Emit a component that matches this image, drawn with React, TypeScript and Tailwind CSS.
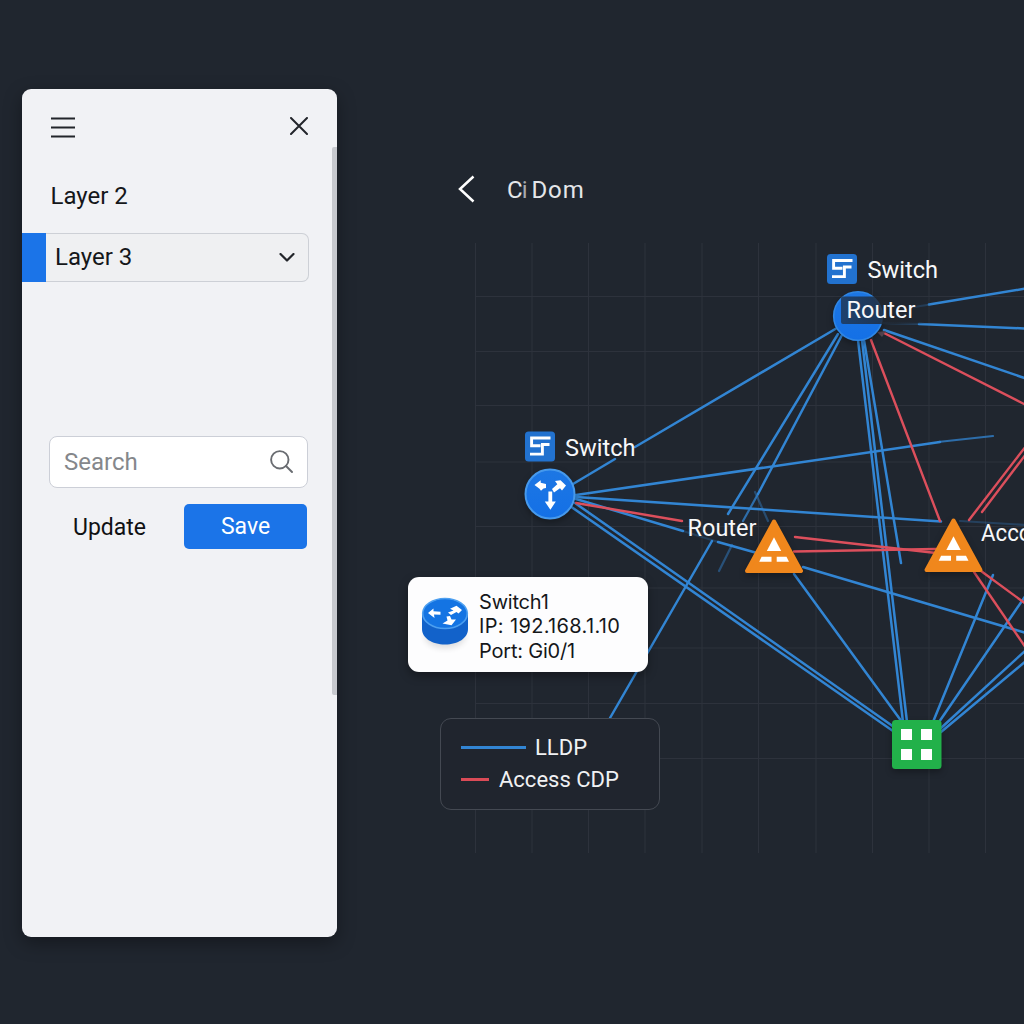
import React from "react";

const columns = [475.5, 532, 588.5, 645, 702, 758.5, 816, 872.5, 929, 985.5];
const rows = [296.5, 351.5, 405.5, 462, 526.5, 588, 648, 703.5, 758.5];

type Link = [number, number, number, number, number?];

const lldpLinks: Link[] = [
  [573, 484, 615, 459],
  [635, 447, 837, 328],
  [576, 495, 940, 442],
  [576, 497, 941, 521.5],
  [576, 499, 683, 531],
  [718, 542, 757, 553],
  [803, 567, 1026, 633],
  [575, 503, 894, 727],
  [570, 506, 893, 731],
  [838, 334, 728, 514],
  [712, 541, 610, 718],
  [842, 335, 758, 494],
  [858, 340, 903, 722],
  [862, 340, 907, 722],
  [864, 340, 901, 563],
  [929, 304.5, 1026, 288.5],
  [919, 324, 1026, 328.5],
  [884, 330, 1026, 378.5],
  [794, 574, 902, 722],
  [993, 575, 933, 722],
  [1026, 595, 939, 722],
  [1026, 650, 941, 728],
  [1026, 661, 941, 732],
];

const fadedLinks: Link[] = [
  [938, 442, 993, 436, 0.75],
  [880, 323, 920, 324, 0.3],
  [914, 307, 930, 304.5, 0.3],
  [758, 494, 743, 521, 0.75],
  [732, 545, 719, 571, 0.45],
  [755, 492, 768, 521, 0.4],
  [960, 521, 1026, 525, 0.28],
  [683, 531, 718, 542, 0.25],
];

const cdpLinks: Link[] = [
  [884, 333, 1026, 405],
  [871, 340, 940, 521],
  [576, 503, 682, 521],
  [795, 537, 936, 553],
  [794, 551.5, 936, 549],
  [969, 520, 1026, 446],
  [982, 512, 1026, 454],
  [974, 572, 1026, 648],
  [981, 571, 1026, 604],
];

function Lines({ links, stroke, width }: { links: Link[]; stroke: string; width: number }) {
  return (
    <g stroke={stroke} strokeWidth={width} strokeLinecap="round">
      {links.map(([x1, y1, x2, y2, o], i) => (
        <line key={i} x1={x1} y1={y1} x2={x2} y2={y2} opacity={o ?? 1} />
      ))}
    </g>
  );
}

function SwitchBadge({ x, y }: { x: number; y: number }) {
  return (
    <g transform={`translate(${x} ${y})`}>
      <rect width="30" height="30" rx="3.5" fill="#2272cf" />
      <path d="M25.5 6.5H6.6V14.2H15.5M5 22.6H17.4V13H24.5" fill="none" stroke="#fff" strokeWidth="2.9" />
    </g>
  );
}

function AccessNode({ x, y }: { x: number; y: number }) {
  return (
    <g transform={`translate(${x} ${y})`} filter="url(#nodeShadow)">
      <path d="M0 -24.5L27 25H-27Z" fill="#f0871c" stroke="#f0871c" strokeWidth="4" strokeLinejoin="round" />
      <path d="M0 -8.8L7.2 5H-7.2Z" fill="#fff" />
      <path d="M-12.4 10.8H-2.5V15.8H-14.8ZM2.7 10.8H12.5L15 15.8H2.7Z" fill="#fff" />
    </g>
  );
}

function Label({ x, y, length, children }: { x: number; y: number; length?: number; children: string }) {
  return (
    <text x={x} y={y} fontSize={23} fill="#f7f8fa" textLength={length} lengthAdjust="spacingAndGlyphs">
      {children}
    </text>
  );
}

function Topology() {
  return (
    <svg className="absolute inset-0 h-full w-full font-[Roboto,sans-serif]" viewBox="337 0 687 1024">
      <defs>
        <filter id="nodeShadow" x="-30%" y="-30%" width="160%" height="160%" colorInterpolationFilters="sRGB">
          <feDropShadow dx="0" dy="3" stdDeviation="3" floodColor="#000" floodOpacity="0.3" />
        </filter>
        <linearGradient id="plate">
          <stop offset="0" stopColor="#20262f" stopOpacity="0.65" />
          <stop offset="0.6" stopColor="#20262f" stopOpacity="0.85" />
          <stop offset="1" stopColor="#20262f" stopOpacity="0" />
        </linearGradient>
        <linearGradient id="node" x2="0" y2="1">
          <stop offset="0" stopColor="#1d77e4" />
          <stop offset="1" stopColor="#1470e6" />
        </linearGradient>
      </defs>

      <g stroke="#2d323c" strokeWidth="1">
        {columns.map((x) => <line key={x} x1={x} y1="243" x2={x} y2="853" />)}
        {rows.map((y) => <line key={y} x1="475" y1={y} x2="1024" y2={y} />)}
      </g>

      <Lines links={lldpLinks} stroke="#3285d3" width={2.5} />
      <Lines links={fadedLinks} stroke="#3285d3" width={2.2} />
      <Lines links={cdpLinks} stroke="#dc4f5c" width={2.4} />

      <path d="M877 332L886 331L882 337Z" fill="#56454f" />
      <g filter="url(#nodeShadow)">
        <circle cx="858" cy="316" r="24.3" fill="url(#node)" stroke="#2f86e4" strokeWidth="1.6" />
      </g>
      <rect x="841" y="296.5" width="92" height="27.5" rx="2" fill="url(#plate)" />
      <SwitchBadge x={827} y={254} />
      <Label x={867.5} y={278} length={70.5}>Switch</Label>
      <Label x={846.5} y={318} length={69}>Router</Label>

      <g filter="url(#nodeShadow)">
        <circle cx="550" cy="494" r="24.5" fill="url(#node)" stroke="#4699ec" strokeWidth="2" />
      </g>
      <g transform="translate(550 494)" fill="#fff">
        <path d="M-1.6 -2.5H2.2V7.5H5.8L0.4 15.8L-5.2 7.5H-1.6Z" />
        <path d="M-15.5 -9L-9.3 -13.8V-11.3L-4 -10V-6L-6.5 -5.5L-9 -3.2L-10.5 -5.2Z" />
        <path d="M16 -8.5L10.5 -13.8L5 -13L7.3 -9.8L2 -5L4 -1.5L10 -5.7L12 -3.5Z" />
      </g>
      <SwitchBadge x={525} y={431.5} />
      <Label x={565} y={456} length={70.5}>Switch</Label>
      <Label x={687.5} y={535.5} length={69}>Router</Label>

      <AccessNode x={774} y={546} />
      <AccessNode x={953.5} y={545} />
      <Label x={981} y={541} length={50.5}>Acco</Label>

      <g filter="url(#nodeShadow)">
        <rect x="892" y="720" width="49.5" height="49" rx="3.5" fill="#22b14a" />
        <path d="M901 729h11v11h-11zM921 729h11v11h-11zM901 749h11v11h-11zM921 749h11v11h-11z" fill="#fff" />
      </g>
    </svg>
  );
}

function RouterIcon() {
  return (
    <svg className="mt-4 h-[60px] w-[50px] shrink-0" viewBox="0 0 50 60" fill="none">
      <ellipse cx="25" cy="44" rx="20" ry="11" fill="#000" opacity=".13" filter="blur(3px)" />
      <path d="M2 20V36C2 45 12 51.5 25 51.5S48 45 48 36V20Z" fill="#1262ca" />
      <ellipse cx="25" cy="20.500" rx="22.300" ry="15" fill="#1474e3" stroke="#4c9ff0" strokeWidth="1.600" />
      <g fill="#fff">
        <path d="M8 20L13.500 15.500V18.200L20.500 18.700V21.800L14 21.500L14.500 25Z" />
        <path d="M28 19.500L33.500 17.500L30 15.800L36.500 12.800L42 17L38.500 20.500L36.500 19L31 22Z" />
        <path d="M26.500 23.500L30 23L31.500 26.500H36L31.500 32.200L22.500 30.500L27.500 27.500Z" />
      </g>
    </svg>
  );
}

export default function App() {
  return (
    <div className="flex h-[1024px] w-[1024px] overflow-hidden bg-[#20262f] font-[Roboto,sans-serif] text-[#15171a]">
      <aside className="relative z-10 mt-[89px] ml-[22px] h-[848px] w-[315px] shrink-0 overflow-hidden rounded-[9px] bg-[#f1f2f5] shadow-[0_6px_18px_rgba(0,0,0,0.35)]">
        <header className="flex h-[76px] items-center justify-between px-[29px]">
          <svg className="mt-0.5 h-6 w-6" viewBox="0 0 24 24" stroke="#22252a" strokeWidth="2.100" strokeLinecap="butt">
            <path d="M0 2.500H24M0 11.500H24M0 20.500H24" />
          </svg>
          <svg className="mb-[2px] h-[18px] w-[18px]" viewBox="0 0 18 18" stroke="#22252a" strokeWidth="2" strokeLinecap="round">
            <path d="M1 1L17 17M17 1L1 17" />
          </svg>
        </header>
        <div className="mt-4 pl-[28.500px] text-[24px] leading-[30px]">Layer 2</div>
        <div className="mt-[22px] flex h-[49px] pr-[28px]">
          <div className="w-6 bg-[#1b74e8]" />
          <button className="flex flex-1 items-center justify-between rounded-r-[7px] border border-l-0 border-[#cdd0d6] bg-[#eff0f2] pr-[13px] pb-[2px] pl-[9px] text-[24px]">
            <span>Layer 3</span>
            <svg className="mt-[2px] h-[9px] w-4" viewBox="0 0 16 9" fill="none" stroke="#22252a" strokeWidth="2.200" strokeLinecap="round" strokeLinejoin="round">
              <path d="M1.500 1L8 7.500L14.500 1" />
            </svg>
          </button>
        </div>
        <div className="mt-[154px] mr-[29px] ml-[27px] flex h-[52px] items-center justify-between rounded-[8px] border-[1.500px] border-[#cccfd7] bg-white px-[14px]">
          <span className="text-[24px] text-[#85878b]">Search</span>
          <svg className="mb-0.5 h-[23px] w-[23px]" viewBox="0 0 23 23" fill="none" stroke="#696c71" strokeWidth="1.900" strokeLinecap="round">
            <circle cx="9.800" cy="9.800" r="8.700" />
            <path d="M16 16L22 22" />
          </svg>
        </div>
        <div className="mt-4 flex h-[45px] items-center pr-[30px] pl-[51px] text-[23px]">
          <button className="w-[73px] pt-[3px] whitespace-nowrap text-[#101113]">Update</button>
          <button className="ml-auto h-full w-[123px] rounded-[5px] bg-[#1b74e8] pt-[2px] text-white">Save</button>
        </div>
        <div className="absolute top-[58px] right-0 h-[548px] w-[5px] rounded-l-[2px] bg-[#c7c9ce]" />
      </aside>

      <main className="relative min-w-0 flex-1">
        <Topology />
        <header className="relative flex h-[220px] items-end pb-[14px] pl-[121px] text-[#e4e6e9]">
          <svg className="mb-[3px] h-7 w-[17px]" viewBox="0 0 17 28" fill="none" stroke="#fff" strokeWidth="2.500">
            <path d="M15.500 1.500L2 14L15.500 26.500" />
          </svg>
          <h1 className="ml-[32px] flex text-[24px] leading-8">
            <span>C</span>
            <span className="ml-[-1px] text-[#a5a9af]">i</span>
            <span className="ml-[4px] tracking-[0.900px]">Dom</span>
          </h1>
        </header>
        <section className="absolute top-[577px] left-[71px] flex h-[95px] w-[240px] rounded-[11px] bg-[#fdfdfe] pl-3 shadow-[0_4px_10px_rgba(0,0,0,0.35)]">
          <RouterIcon />
          <div className="mt-[13px] ml-[9px] font-[Inter,sans-serif] text-[20px] leading-[24.300px] tracking-[-0.200px] whitespace-nowrap">
            <p>Switch1</p>
            <p className="tracking-[0.350px]">IP: 192.168.1.10</p>
            <p>Port: Gi0/1</p>
          </div>
        </section>
        <section className="absolute top-[718px] left-[103px] flex h-[92px] w-[220px] flex-col rounded-[11px] border-[1.500px] border-[#444952] bg-[#20252e] pt-[12px] pl-5 text-[22px] leading-8 text-[#f0f1f3]">
          <div className="flex items-center">
            <i className="h-[3px] w-[65px] bg-[#3285d3]" />
            <span className="ml-[9px] translate-y-px">LLDP</span>
          </div>
          <div className="flex items-center">
            <i className="h-[3px] w-7 bg-[#da4b57]" />
            <span className="ml-[10px] translate-y-px">Access CDP</span>
          </div>
        </section>
      </main>
    </div>
  );
}
